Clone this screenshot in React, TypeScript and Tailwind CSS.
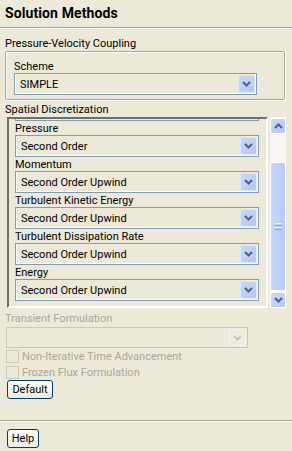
import React from 'react'

const font = { fontFamily: 'Roboto, "Liberation Sans", Arial, sans-serif' }

function Chevron({ up, color = '#4d6185' }: { up?: boolean; color?: string }) {
  return (
    <svg width="9" height="6" viewBox="0 0 9 6">
      <path d={up ? 'M1 5 L4.5 1.5 L8 5' : 'M1 1 L4.5 4.5 L8 1'} fill="none" stroke={color} strokeWidth="2" />
    </svg>
  )
}

function Combo({ value, width, disabled }: { value: string; width: string; disabled?: boolean }) {
  return (
    <div className={`${width} flex ${disabled ? 'h-[21px]' : 'h-[22px]'} shrink-0 border ${disabled ? 'border-[#c9c7ba]' : 'border-[#7f9db9]'}`}>
      <div className={`flex flex-1 border ${disabled ? 'border-[#ece9d8]' : 'border-white border-t-[#ece9d8]'}`}>
        <div className="flex flex-1 items-center pl-[4px] text-black">{value}</div>
        <div
          className={`flex w-[17px] items-center justify-center rounded-[2px] border ${
            disabled
              ? 'border-[#f4f3ee] bg-[#ebeae3]'
              : 'border-[#dfe8fd] bg-gradient-to-br from-[#c9d8fc] to-[#b4c8f6]'
          }`}
        >
          <Chevron color={disabled ? '#c9c7ba' : '#4d6185'} />
        </div>
      </div>
    </div>
  )
}

function Checkbox({ label }: { label: string }) {
  return (
    <div className="flex h-[16px] items-center gap-[3px]">
      <div className="h-[13px] w-[13px] border border-[#cac8bb]" />
      <span className="text-[#aca899]">{label}</span>
    </div>
  )
}

function XpButton({ label, width }: { label: string; width: string }) {
  return (
    <div
      className={`${width} flex h-[19px] items-center justify-center rounded-[3px] border border-[#003c74] bg-gradient-to-b from-white to-[#ecebe6] text-black`}
    >
      {label}
    </div>
  )
}

const fields = [
  ['Pressure', 'Second Order'],
  ['Momentum', 'Second Order Upwind'],
  ['Turbulent Kinetic Energy', 'Second Order Upwind'],
  ['Turbulent Dissipation Rate', 'Second Order Upwind'],
  ['Energy', 'Second Order Upwind'],
]

export default function App() {
  return (
    <div className="flex h-[451px] w-[292px] flex-col bg-[#ece9d8] text-[11px] leading-[13px] text-black" style={font}>
      <div className="flex h-[27px] shrink-0 items-center pl-[5px] text-[14px] font-bold tracking-[0.1px]">Solution Methods</div>
      <div className="h-[2px] shrink-0 border-t border-b border-t-[#aca899] border-b-white" />

      <div className="mt-[8px] flex h-[13px] shrink-0 items-center pl-[5px]">Pressure-Velocity Coupling</div>
      <div className="ml-[5px] mt-[1px] h-[49px] w-[280px] shrink-0 rounded-[2px] border border-[#aca899] shadow-[1px_1px_0_white,inset_1px_1px_0_white]">
        <div className="mt-[8px] flex h-[13px] items-center pl-[8px]">Scheme</div>
        <div className="ml-[8px]">
          <Combo value="SIMPLE" width="w-[243px]" />
        </div>
      </div>

      <div className="mt-[3px] flex h-[13px] shrink-0 items-center pl-[5px]">Spatial Discretization</div>
      <div className="ml-[7px] mt-[1px] flex h-[191px] shrink-0">
        <div className="w-[261px] overflow-hidden border-2 border-t-[#716f64] border-l-[#716f64] border-r-white border-b-white">
          <div className="-mt-[14px] pl-[6px]">
            <div className="h-[16px] w-[244px] border border-[#7f9db9] border-t-0" />
            {fields.map(([label, value]) => (
              <div key={label}>
                <div className="flex h-[14px] items-center">{label}</div>
                <Combo value={value} width="w-[244px]" />
              </div>
            ))}
          </div>
        </div>
        <div className="ml-[2px] flex w-[16px] flex-col bg-[#f7f6f2]">
          <div className="mt-[1px] flex h-[16px] shrink-0 items-center justify-center rounded-[2px] border border-white bg-gradient-to-br from-[#c9d8fc] to-[#b4c8f6]">
            <Chevron up />
          </div>
          <div className="mt-[28px] flex h-[129px] shrink-0 items-center justify-center rounded-[2px] border border-white bg-gradient-to-r from-[#c6d6fb] to-[#b7cbf8]">
            <div className="flex flex-col gap-[1px]">
              <div className="h-[1px] w-[7px] bg-[#eef3fe]" />
              <div className="h-[1px] w-[7px] bg-[#8ca4d8]" />
              <div className="h-[1px] w-[7px] bg-[#eef3fe]" />
              <div className="h-[1px] w-[7px] bg-[#8ca4d8]" />
            </div>
          </div>
          <div className="mt-[1px] flex h-[16px] shrink-0 items-center justify-center rounded-[2px] border border-white bg-gradient-to-br from-[#c9d8fc] to-[#b4c8f6]">
            <Chevron />
          </div>
        </div>
      </div>

      <div className="mt-[4px] flex h-[13px] shrink-0 items-center pl-[5px] text-[#aca899]">Transient Formulation</div>
      <div className="ml-[6px] mt-[2px]">
        <Combo value="" width="w-[242px]" disabled />
      </div>
      <div className="ml-[6px]">
        <Checkbox label="Non-Iterative Time Advancement" />
        <Checkbox label="Frozen Flux Formulation" />
      </div>
      <div className="ml-[7px]">
        <XpButton label="Default" width="w-[46px]" />
      </div>

      <div className="mt-[21px] h-[2px] shrink-0 border-t border-b border-t-[#aca899] border-b-white" />
      <div className="ml-[7px] mt-[7px]">
        <XpButton label="Help" width="w-[32px]" />
      </div>
    </div>
  )
}
